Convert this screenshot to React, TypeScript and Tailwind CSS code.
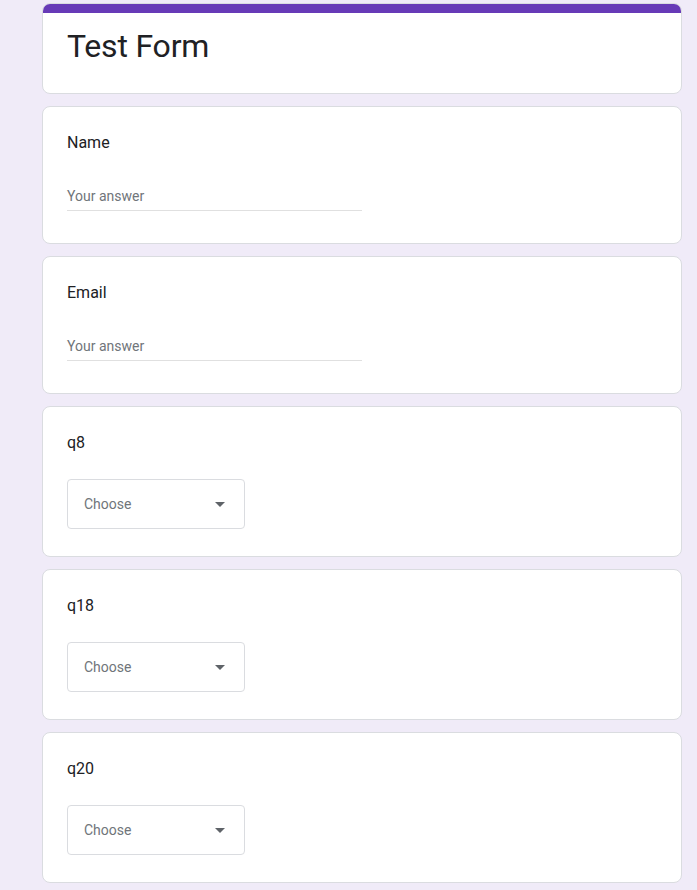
import React from "react";

const titleFont = { fontFamily: 'Roboto, Arial, sans-serif' };

function TextQ({ label }: { label: string }) {
  return (
    <div className="rounded-lg border border-[#dadce0] bg-white px-6 pt-6 pb-8">
      <div className="text-[16px] leading-6 text-[#202124] font-['Roboto',sans-serif]">{label}</div>
      <div className="mt-[31px] w-[295px] border-b border-[#e0e0e0] pb-[4px] text-[14px] leading-5 text-[#70757a] font-['Roboto',sans-serif]">
        Your answer
      </div>
    </div>
  );
}

function SelectQ({ label }: { label: string }) {
  return (
    <div className="rounded-lg border border-[#dadce0] bg-white px-6 pt-6 pb-[27px]">
      <div className="text-[16px] leading-6 text-[#202124] font-['Roboto',sans-serif]">{label}</div>
      <div className="mt-[24px] flex h-[50px] w-[178px] items-center justify-between rounded border border-[#dadce0] pl-4 pr-[19px]">
        <span className="text-[14px] text-[#70757a] font-['Roboto',sans-serif]">Choose</span>
        <svg width="10" height="5" viewBox="0 0 10 5">
          <path d="M0 0 L10 0 L5 5 Z" fill="#5f6368" />
        </svg>
      </div>
    </div>
  );
}

export default function App() {
  return (
    <div className="min-h-[890px] w-full bg-[#f0ebf8] pt-[3px]">
      <div className="ml-[42px] flex w-[640px] flex-col gap-[12px]">
        <div className="overflow-hidden rounded-lg border border-[#dadce0] bg-white">
          <div className="-mx-px -mt-px h-[10px] bg-[#673ab7]" />
          <div className="px-6 pt-[11px] pb-[25px]">
            <h1 className="text-[32px] leading-[44px] tracking-[-0.2px] text-[#202124]" style={titleFont}>
              Test Form
            </h1>
          </div>
        </div>
        <TextQ label="Name" />
        <TextQ label="Email" />
        <SelectQ label="q8" />
        <SelectQ label="q18" />
        <SelectQ label="q20" />
      </div>
    </div>
  );
}
